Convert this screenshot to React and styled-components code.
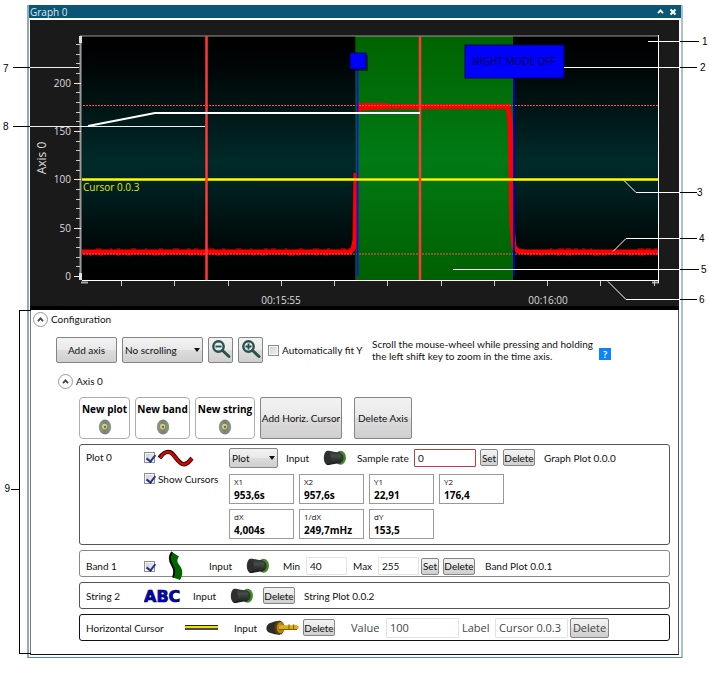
import React from "react";
import styled, { createGlobalStyle } from "styled-components";

const GlobalStyle = createGlobalStyle`
  * { box-sizing: border-box; }
  body {
    margin: 0;
    background: #fff;
    color: #111;
    font: 10px/12px Lato, "Open Sans", sans-serif;
  }
  button, input, select { font: inherit; color: inherit; margin: 0; }
`;

const Page = styled.main`
  padding: 5px 26px 17px 27px;
`;

const Window = styled.section`
  border: 1px solid #4f89a3;
  border-left: 2px solid #8fabb8;
  border-right: 2px solid #a8c2ce;
  border-top: 0;
  background: #fff;
`;

const TitleBar = styled.header`
  display: flex;
  align-items: center;
  gap: 5px;
  height: 13px;
  padding: 0 4px 0 1px;
  background: #0b5575;
  color: #dce9ef;
`;

const Title = styled.h1`
  flex: 1;
  margin: 0;
  font-family: "Open Sans", sans-serif;
  font-size: 10px;
  line-height: 12px;
  font-weight: 400;
`;

const TitleButton = styled.button`
  display: flex;
  padding: 0;
  border: 0;
  background: none;
`;

const Body = styled.div`
  margin: 2px 2px 2px 1px;
  border: 1px solid #111;
  border-left-color: #777;
  border-right: 1px solid #555;
  border-top: 0;
`;

const ChartFrame = styled.div`
  border-bottom: 4px solid #000;
  margin-left: -1px;
  margin-right: -1px;
`;

const ChartSvg = styled.svg`
  display: block;
  width: 100%;
  height: auto;
  overflow: visible;
  position: relative;
  z-index: 1;
  font-family: "Open Sans", "Noto Sans", sans-serif;
  font-size: 10px;
`;

const Config = styled.section`
  position: relative;
  padding: 1px 8px 8px 2px;
`;

const Bracket = styled.div`
  position: absolute;
  left: -12px;
  top: 0;
  bottom: 0;
  width: 12px;
  padding-top: 14px;
  border: 1px solid #000;
  border-right: 0;
  display: flex;
  align-items: center;
`;

const BracketLabel = styled.span`
  position: absolute;
  right: 11px;
  display: flex;
  align-items: center;
  gap: 1px;
  font: 10px/12px "Liberation Sans", sans-serif;
  color: #000;
  &::after { content: ""; width: 9px; height: 1px; background: #000; }
`;

const Heading = styled.div`
  display: flex;
  align-items: center;
  gap: 3px;
  height: 16px;
`;

const AxisHeading = styled(Heading)`
  margin-left: -21px;
`;

const HeadingText = styled.h2`
  margin: 0;
  font-size: 10px;
  line-height: 12px;
  font-weight: 400;
`;

const Expander = styled.button`
  display: flex;
  align-items: center;
  justify-content: center;
  width: 15px;
  height: 15px;
  padding: 0;
  border: 1px solid #999;
  border-radius: 50%;
  background: #fff;
`;

const Toolbar = styled.div`
  display: flex;
  align-items: center;
  gap: 5px;
  margin: 10px 0 10px 23px;
`;

const Button = styled.button`
  display: flex;
  align-items: center;
  justify-content: center;
  flex: none;
  width: ${(p) => p.$w}px;
  height: ${(p) => p.$h || 17}px;
  padding: 0;
  white-space: nowrap;
  border: 1px solid #858585;
  border-radius: 2px;
  background: linear-gradient(#f2f2f2, #e9e9e9 48%, #dcdcdc 52%, #cfcfcf);
`;

const SelectBox = styled.span`
  position: relative;
  display: flex;
  flex: none;
  width: ${(p) => p.$w}px;
  height: ${(p) => p.$h}px;
`;

const Select = styled.select`
  appearance: none;
  width: 100%;
  padding: 0 0 0 2px;
  border: 1px solid #858585;
  border-radius: 2px;
  background: linear-gradient(#f2f2f2, #e9e9e9 48%, #dcdcdc 52%, #cfcfcf);
`;

const Caret = styled.svg`
  position: absolute;
  right: 3px;
  top: 50%;
  margin-top: -2px;
  pointer-events: none;
`;

const CheckLabel = styled.label`
  display: flex;
  align-items: center;
  gap: 3px;
  white-space: nowrap;
`;

const FitLabel = styled(CheckLabel)`
  width: 94px;
`;

const Check = styled.input`
  appearance: none;
  display: block;
  flex: none;
  width: 11px;
  height: 11px;
  border: 1px solid #8e8f8f;
  background: linear-gradient(135deg, #c9ced6, #f6f6f6);
  box-shadow: inset 0 0 0 1px #f4f4f4;
  &:checked::after {
    content: "";
    display: block;
    width: 4px;
    height: 7px;
    margin: 0 0 0 3px;
    border: solid #2b3580;
    border-width: 0 2px 2px 0;
    transform: rotate(38deg);
  }
`;

const Hint = styled.p`
  margin: 0 0 0 5px;
  width: 222px;
  white-space: nowrap;
`;

const Help = styled.button`
  width: 12px;
  height: 12px;
  padding: 0;
  margin-top: 8px;
  border: 0;
  background: #0a84ff;
  color: #fff;
  font-weight: 700;
  line-height: 12px;
`;

const AxisArea = styled.div`
  padding-left: 46px;
`;

const AxisActions = styled.div`
  display: flex;
  gap: 5px;
  margin: 8px 0 5px;
`;

const SourceCard = styled.button`
  display: flex;
  flex-direction: column;
  align-items: center;
  gap: 4px;
  width: ${(p) => p.$w}px;
  height: 42px;
  padding: 5px 0 0;
  border: 1px solid #adadad;
  border-radius: 4px;
  background: #fff;
  color: #000;
  font-family: "Open Sans", sans-serif;
  font-weight: 700;
  white-space: nowrap;
`;

const Spacer = styled.span`
  width: 2px;
`;

const Panel = styled.article`
  display: grid;
  grid-template-columns: ${(p) => p.$cols};
  align-items: center;
  height: 27px;
  margin-bottom: 5px;
  padding: 0 0 0 6px;
  border: 1px solid ${(p) => p.$line || "#555"};
  border-radius: 3px;
  white-space: nowrap;
`;

const PlotPanel = styled(Panel)`
  height: auto;
  align-items: start;
  padding: 2px 0 5px 6px;
`;

const PlotName = styled.span`
  line-height: 21px;
`;

const PlotOptions = styled.div`
  display: grid;
  grid-template-rows: 21px 21px;
  align-items: center;
`;

const PlotRow = styled.div`
  display: grid;
  grid-template-columns: 57px 37px 34px 57px 66px 23px 41px 1fr;
  align-items: center;
  height: 21px;
`;

const Readouts = styled.div`
  display: grid;
  grid-template-columns: repeat(4, 65px);
  gap: 5px;
  margin-top: 6px;
`;

const Readout = styled.div`
  display: flex;
  flex-direction: column;
  justify-content: center;
  height: 30px;
  padding: 0 0 0 4px;
  border: 1px solid #999;
  font-family: "Open Sans", sans-serif;
  font-size: 8px;
  line-height: 12px;
`;

const ReadoutValue = styled.strong`
  color: #000;
  font-size: 10px;
  line-height: 14px;
`;

const Field = styled.input`
  width: ${(p) => p.$w}px;
  height: ${(p) => p.$h || 18}px;
  padding: 0 3px;
  border: 1px solid ${(p) => p.$border || "#e2e3ea"};
  border-radius: 1px;
  background: #fff;
`;

const Large = styled.div`
  display: contents;
  font-family: "Open Sans", sans-serif;
  font-size: 11px;
  color: #444;
`;

const Chevron = ({ color = "#444" }) => (
  <svg width="7" height="5" viewBox="0 0 7 5" aria-hidden="true">
    <path d="M1 4.2 3.5 1.4 6 4.2" fill="none" stroke={color} strokeWidth="1.8" />
  </svg>
);

const Magnifier = ({ plus }) => (
  <svg width="22" height="22" viewBox="0 0 22 22" aria-hidden="true">
    <circle cx="8.5" cy="7.5" r="5.2" fill="#dfe9e8" stroke="#29504e" strokeWidth="2.4" />
    <path d="M12.5 11.5 19 17.5" stroke="#29504e" strokeWidth="3" strokeLinecap="round" />
    <path d={plus ? "M5.5 7.5h6M8.5 4.5v6" : "M5.5 7.5h6"} stroke="#29504e" strokeWidth="1.8" />
  </svg>
);

const Socket = () => (
  <svg width="14" height="16" viewBox="0 0 14 16" aria-hidden="true">
    <defs>
      <linearGradient id="socket" x2="1">
        <stop offset="0" stopColor="#8c9c87" />
        <stop offset=".5" stopColor="#728471" />
        <stop offset="1" stopColor="#8a9988" />
      </linearGradient>
    </defs>
    <ellipse cx="7" cy="8" rx="6.2" ry="7.4" fill="url(#socket)" />
    <ellipse cx="6.6" cy="7.6" rx="2.6" ry="2.8" fill="#d8c88a" />
    <circle cx="7" cy="8" r="1.2" fill="#8b6a28" />
  </svg>
);

const Jack = () => (
  <svg width="24" height="16" viewBox="0 0 24 16" aria-hidden="true">
    <defs>
      <linearGradient id="jack" x2="0" y2="1">
        <stop offset="0" stopColor="#292b2b" />
        <stop offset=".35" stopColor="#484b4b" />
        <stop offset="1" stopColor="#171818" />
      </linearGradient>
    </defs>
    <ellipse cx="17.5" cy="7.7" rx="5.5" ry="7" fill="#438a2a" />
    <ellipse cx="17" cy="8" rx="3.5" ry="5" fill="#293a24" />
    <path d="M4 .8C7 .2 9 2 17 2.200c2.300 2.500 2.300 9 0 11.300-7 0-10 2-13 1.400C-.3 13-.3 2.500 4 .8z" fill="url(#jack)" />
    <ellipse cx="4.600" cy="8" rx="3.300" ry="6" fill="#2d2f2f" />
  </svg>
);

const Plug = () => (
  <svg width="34" height="16" viewBox="0 0 34 16" aria-hidden="true">
    <path d="M3 3.500C7 2 10 .8 14 .8v14C9 14.800 6 13.500 3 12.500-.5 10.500-.5 6 3 3.500z" fill="#302c26" />
    <ellipse cx="13.500" cy="7.700" rx="5" ry="7" fill="#544016" />
    <ellipse cx="14.500" cy="7.700" rx="3.800" ry="5.600" fill="#b8860b" />
    <path d="M13 5.200h9l1-1 1 1h3l1-.8 4 1.300 1 1.300-1 2-4 1.200-1-.7h-3l-1 1-1-1h-9z" fill="#e0ac13" />
    <path d="M13 9.500h18M23 4.500v5.500M27.500 4.500v5.500" stroke="#805d0b" fill="none" />
  </svg>
);

const Wave = () => (
  <svg width="36" height="18" viewBox="0 0 36 18" aria-hidden="true">
    <path d="M1.500 9C5 4 8 1.800 12 3.200c5 1.800 8 12 14 12 4 0 5-3 8-6" fill="none" stroke="#111" strokeWidth="4.400" />
    <path d="M2 9C5 4.500 8 2 12 3.400c5 1.800 8 12 14 12 4 0 5-3 8-6" fill="none" stroke="#e00000" strokeWidth="2.600" />
  </svg>
);

const BandIcon = () => (
  <svg width="16" height="30" viewBox="0 0 16 30" aria-hidden="true">
    <path d="M4 1C1 5 1 9 4 14s2.500 8 1 12.500l7 2.500c3-5 3-10 0-14s-3.500-6-1-9.500z" fill="#006400" />
    <path d="M4 1C1 5 1 9 4 14s2.500 8 1 12.500" fill="none" stroke="#0a0a0a" strokeWidth="2" />
  </svg>
);

const AbcIcon = () => (
  <svg width="38" height="16" viewBox="0 0 38 16">
    <text x="0" y="14" fill="#0000e0" stroke="#000" strokeWidth="0.700" fontFamily="DejaVu Sans" fontWeight="700" fontSize="16">ABC</text>
  </svg>
);

const LineIcon = () => (
  <svg width="33" height="5" viewBox="0 0 33 5" aria-hidden="true">
    <path d="M0 .5h33" stroke="#222" />
    <path d="M0 2h33" stroke="#eee000" strokeWidth="2" />
    <path d="M0 4h33" stroke="#111" strokeWidth="1.500" />
  </svg>
);

const Dropdown = ({ label, value, w, h }) => (
  <SelectBox $w={w} $h={h}>
    <Select aria-label={label} defaultValue={value}>
      <option>{value}</option>
    </Select>
    <Caret width="6" height="4" viewBox="0 0 6 4" aria-hidden="true">
      <path d="M0 0h6L3 4z" fill="#111" />
    </Caret>
  </SelectBox>
);

const callouts = [
  { n: 1, y: 41, line: "M648 41H680", end: 699, x: 702 },
  { n: 2, y: 67, line: "M564 67H680", end: 697, x: 700 },
  { n: 3, y: 192, line: "M624 180 636 192H680", end: 697, x: 697 },
  { n: 4, y: 238, line: "M613 251 626 238H680", end: 697, x: 699 },
  { n: 5, y: 269, line: "M453 269H680", end: 699, x: 701 },
  { n: 6, y: 299, line: "M608 281 626 299H680", end: 697, x: 699 },
];

const yMinor = Array.from({ length: 25 }, (_, i) => 276.5 - i * 9.66);
const xTicks = Array.from({ length: 11 }, (_, i) => 121.5 + i * 53.25);
const yLabels = [200, 150, 100, 50, 0];

const ripple = (from, to, y, step) => {
  let d = "";
  for (let x = from; x < to; x += step) {
    if ((x * 7) % 11 < 6) d += `M${x} ${y}h${2 + ((x * 3) % 5)}`;
  }
  return d;
};

const Chart = () => (
  <ChartSvg viewBox="30 20 649 286">
    <defs>
      <linearGradient id="night" x2="0" y2="1">
        <stop offset="0" stopColor="#000" />
        <stop offset=".12" stopColor="#000505" />
        <stop offset=".52" stopColor="#002a2a" />
        <stop offset=".9" stopColor="#000404" />
        <stop offset="1" stopColor="#000" />
      </linearGradient>
      <linearGradient id="band" x2="0" y2="1">
        <stop offset="0" stopColor="#006400" />
        <stop offset=".5" stopColor="#007a14" />
        <stop offset="1" stopColor="#006000" />
      </linearGradient>
    </defs>
    <rect x="30" y="20" width="649" height="286" fill="#1a1a1a" />
    <rect x="82" y="36" width="577" height="245" fill="url(#night)" />
    <rect x="355" y="36" width="158" height="245" fill="url(#band)" />
    <path d="M355.500 36V281" stroke="#0a3f0a" />

    <path d="M80 36H659" stroke="#999" />
    <path d="M80.500 36V280" stroke="#999" strokeWidth="2" />
    <path d="M80.500 36V43M80.500 273V280" stroke="#ddd" strokeWidth="3" />
    <path d="M81 282.500H88M652 282.500H659" stroke="#aaa" strokeWidth="2" />
    <path d={yMinor.map((y) => `M76 ${Math.floor(y)}.5H80`).join("")} stroke="#c8c8c8" />
    <path d={yLabels.map((v) => `M74 ${Math.floor(276.5 - v * 0.966)}.5H81`).join("")} stroke="#eee" />
    <path d={xTicks.map((x) => `M${Math.floor(x)}.5 281V286`).join("")} stroke="#ccc" />
    {yLabels.map((v) => (
      <text key={v} x="71" y={280 - v * 0.966} textAnchor="end" fill="#ddd">{v}</text>
    ))}
    <text x="281" y="304" textAnchor="middle" fill="#ddd">00:15:55</text>
    <text x="548" y="304" textAnchor="middle" fill="#ddd">00:16:00</text>
    <text transform="translate(46 158) rotate(-90)" textAnchor="middle" fill="#ddd" fontSize="12">Axis 0</text>

    <path d="M82 252H350L353 249 355 240 356 173M359 108 390 106.500H508L510 120 512 225 514 247 518 251 525 252H658" fill="none" stroke="red" strokeWidth="5" />
    <path d="M359 102V113M362 104.500H387" stroke="red" strokeWidth="3" />
    <path d={ripple(96, 350, 249, 7) + ripple(90, 346, 255, 9) + ripple(526, 655, 249, 8) + ripple(530, 655, 255, 9)} stroke="#f00000" />
    <path d="M83 105.500H658M83 254H658" stroke="#ff5050" strokeDasharray="2 1" />
    <path d="M357.500 69V276" stroke="#1414d0" strokeWidth="2" />
    <path d="M514 77V276" stroke="#0000b0" strokeWidth="2" />
    <path d="M82 179.500H658" stroke="#8c8c00" strokeWidth="3" />
    <path d="M82 179.500H658" stroke="#ffff00" strokeWidth="2" />
    <path d="M206.500 36V281M420 36V281" stroke="#ff3838" strokeWidth="2.500" />
    <text x="83" y="191" fill="#e6e600">Cursor 0.0.3</text>

    <rect x="352" y="55" width="16" height="16" fill="#000" opacity=".5" />
    <rect x="350" y="53" width="16" height="16" fill="#0000ff" stroke="#000060" />
    <rect x="465" y="45" width="99" height="33" fill="#0000ff" stroke="#000060" />
    <text x="514" y="65" textAnchor="middle" fill="#000038">NIGHT MODE OFF</text>

    <path d="M82 280.500H658.500M658.500 35V283" fill="none" stroke="#fff" />
    <path d="M30 67.500H79M30 126.500H205" stroke="#eee" />
    <path d="M88 126 155 113H420" fill="none" stroke="#fff" strokeWidth="2" />
    <path d="M13 67.500H30M13 126.500H30" stroke="#000" />
    <g fontFamily="Liberation Sans, sans-serif" fill="#000">
      <text x="3" y="72">7</text>
      <text x="3" y="130">8</text>
      {callouts.map((c) => (
        <g key={c.n}>
          <path d={c.line} transform="translate(0 .5)" fill="none" stroke="#fff" />
          <path d={`M680 ${c.y + 0.5}H${c.end}`} stroke="#000" />
          <text x={c.x} y={c.y + 4}>{c.n}</text>
        </g>
      ))}
    </g>
  </ChartSvg>
);

const readouts = [
  ["X1", "953,6s"], ["X2", "957,6s"], ["Y1", "22,91"], ["Y2", "176,4"],
  ["dX", "4,004s"], ["1/dX", "249,7mHz"], ["dY", "153,5"],
];

export default function App() {
  return (
    <Page>
      <GlobalStyle />
      <Window>
        <TitleBar>
          <Title>Graph 0</Title>
          <TitleButton aria-label="Collapse"><Chevron color="#fff" /></TitleButton>
          <TitleButton aria-label="Close">
            <svg width="8" height="8" viewBox="0 0 8 8" aria-hidden="true">
              <path d="M1.500 1.500 6.500 6.500M6.500 1.500 1.500 6.500" stroke="#fff" strokeWidth="2" />
            </svg>
          </TitleButton>
        </TitleBar>
        <Body>
          <ChartFrame><Chart /></ChartFrame>
          <Config>
            <Bracket><BracketLabel>9</BracketLabel></Bracket>
            <Heading>
              <Expander aria-label="Toggle configuration"><Chevron /></Expander>
              <HeadingText>Configuration</HeadingText>
            </Heading>
            <Toolbar>
              <Button $w={61} $h={26}>Add axis</Button>
              <Dropdown label="Scrolling" value="No scrolling" w={81} h={26} />
              <Button $w={25} $h={26} aria-label="Zoom out"><Magnifier /></Button>
              <Button $w={25} $h={26} aria-label="Zoom in"><Magnifier plus /></Button>
              <FitLabel><Check type="checkbox" />Automatically fit Y</FitLabel>
              <Hint>Scroll the mouse-wheel while pressing and holding<br />the left shift key to zoom in the time axis.</Hint>
              <Help aria-label="Help">?</Help>
            </Toolbar>
            <AxisArea>
              <AxisHeading>
                <Expander aria-label="Toggle axis"><Chevron /></Expander>
                <HeadingText>Axis 0</HeadingText>
              </AxisHeading>
              <AxisActions>
                <SourceCard $w={51}>New plot<Socket /></SourceCard>
                <SourceCard $w={55}>New band<Socket /></SourceCard>
                <SourceCard $w={60}>New string<Socket /></SourceCard>
                <Button $w={82} $h={42}>Add Horiz. Cursor</Button>
                <Spacer />
                <Button $w={58} $h={42}>Delete Axis</Button>
              </AxisActions>

              <PlotPanel $cols="58px 85px 1fr">
                <PlotName>Plot 0</PlotName>
                <PlotOptions>
                  <CheckLabel><Check type="checkbox" defaultChecked aria-label="Show plot" /><Wave /></CheckLabel>
                  <CheckLabel><Check type="checkbox" defaultChecked />Show Cursors</CheckLabel>
                </PlotOptions>
                <div>
                  <PlotRow>
                    <Dropdown label="Plot type" value="Plot" w={49} h={20} />
                    <span>Input</span>
                    <Jack />
                    <label htmlFor="rate">Sample rate</label>
                    <Field id="rate" $w={62} $border="#b84040" defaultValue="0" />
                    <Button $w={18}>Set</Button>
                    <Button $w={32}>Delete</Button>
                    <span>Graph Plot 0.0.0</span>
                  </PlotRow>
                  <Readouts>
                    {readouts.map(([name, value]) => (
                      <Readout key={name}><span>{name}</span><ReadoutValue>{value}</ReadoutValue></Readout>
                    ))}
                  </Readouts>
                </div>
              </PlotPanel>

              <Panel $line="#888" $cols="58px 24px 41px 37px 37px 23px 47px 25px 43px 22px 42px 1fr">
                <span>Band 1</span>
                <Check type="checkbox" defaultChecked aria-label="Show band" />
                <BandIcon />
                <span>Input</span>
                <Jack />
                <label htmlFor="min">Min</label>
                <Field id="min" $w={41} defaultValue="40" />
                <label htmlFor="max">Max</label>
                <Field id="max" $w={41} defaultValue="255" />
                <Button $w={18}>Set</Button>
                <Button $w={32}>Delete</Button>
                <span>Band Plot 0.0.1</span>
              </Panel>

              <Panel $cols="58px 49px 37px 33px 41px 1fr">
                <span>String 2</span>
                <AbcIcon />
                <span>Input</span>
                <Jack />
                <Button $w={32}>Delete</Button>
                <span>String Plot 0.0.2</span>
              </Panel>

              <Panel $line="#111" $cols="99px 49px 32px 37px 48px 35px 76px 33px 75px 1fr">
                <span>Horizontal Cursor</span>
                <LineIcon />
                <span>Input</span>
                <Plug />
                <Button $w={32}>Delete</Button>
                <Large>
                  <label htmlFor="value">Value</label>
                  <Field id="value" $w={73} $h={20} defaultValue="100" />
                  <label htmlFor="label">Label</label>
                  <Field id="label" $w={73} $h={20} defaultValue="Cursor 0.0.3" />
                  <Button $w={39} $h={20}>Delete</Button>
                </Large>
              </Panel>
            </AxisArea>
          </Config>
        </Body>
      </Window>
    </Page>
  );
}
